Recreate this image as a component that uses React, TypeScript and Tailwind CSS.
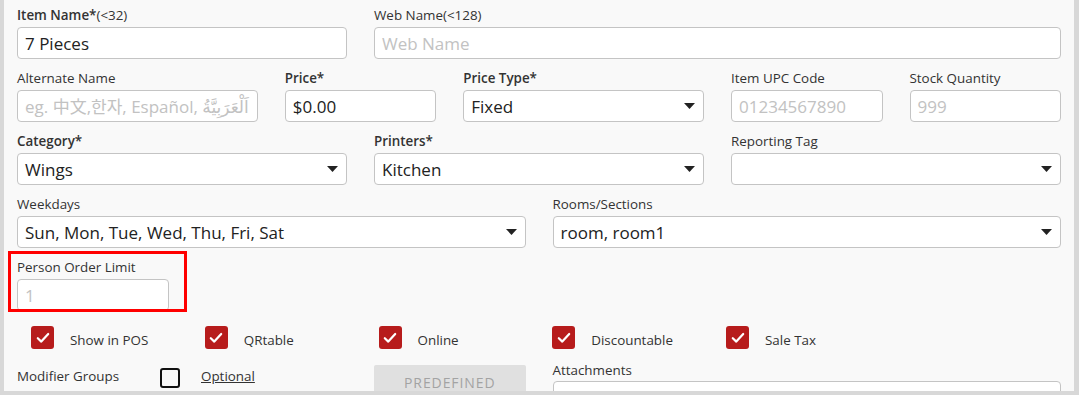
import React from "react";

const font = { fontFamily: '"Open Sans", "Noto Sans", "Noto Sans CJK KR", "DejaVu Sans", sans-serif' };

function Label({ bold, extra, children }: { bold?: boolean; extra?: string; children: React.ReactNode }) {
  return (
    <div className={`h-[20px] mb-[2px] text-[13.4px] leading-[20px] text-[#333] whitespace-nowrap ${bold ? "font-semibold" : ""}`}>
      {children}
      {extra && <span className="font-normal">{extra}</span>}
    </div>
  );
}

function Input({ value, placeholder }: { value?: string; placeholder?: string }) {
  return (
    <div className="h-[32px] rounded-[4px] border border-[#c4c4c4] bg-white px-[7px] pt-[2px] flex items-center overflow-hidden">
      {value ? (
        <span className="text-[17px] text-[#222] whitespace-nowrap">{value}</span>
      ) : (
        <span className="text-[17px] text-[#c2c2c2] whitespace-nowrap">{placeholder}</span>
      )}
    </div>
  );
}

function Select({ value }: { value?: string }) {
  return (
    <div className="h-[32px] rounded-[4px] border border-[#c4c4c4] bg-white pl-[7px] pr-[8px] flex items-center justify-between overflow-hidden">
      <span className="text-[17px] text-[#222] whitespace-nowrap pt-[2px]">{value ?? ""}</span>
      <svg width="11" height="6" viewBox="0 0 11 6" className="shrink-0">
        <path d="M0 0 H11 L5.5 6 Z" fill="#222" />
      </svg>
    </div>
  );
}

function Check({ label }: { label: string }) {
  return (
    <div className="w-[173.75px] flex items-center">
      <div className="w-[23px] h-[23px] rounded-[3px] bg-[#b71c1c] flex items-center justify-center">
        <svg width="14" height="12" viewBox="0 0 14 12">
          <path d="M1.8 6.2 L5.3 9.6 L12.2 2" fill="none" stroke="white" strokeWidth="2.2" strokeLinecap="round" strokeLinejoin="round" />
        </svg>
      </div>
      <span className="ml-[16px] text-[13.4px] text-[#333] pt-[5px]">{label}</span>
    </div>
  );
}

export default function App() {
  return (
    <div className="w-[1079px] h-[395px] bg-[#d8d8d8] pl-[4px] pr-[5px] pb-[4px]" style={font}>
      <div className="w-[1070px] h-[391px] bg-[#f9f9f9] overflow-hidden px-[13px] pt-[5px]">
        <div className="grid grid-cols-12 gap-x-[27px] gap-y-[9px]">
          <div className="col-span-4">
            <Label bold extra="(<32)">Item Name*</Label>
            <Input value="7 Pieces" />
          </div>
          <div className="col-span-8">
            <Label>Web Name(&lt;128)</Label>
            <Input placeholder="Web Name" />
          </div>

          <div className="col-span-3">
            <Label>Alternate Name</Label>
            <Input placeholder="eg. 中文,한자, Español, اَلْعَرَبِيَّةُ" />
          </div>
          <div className="col-span-2">
            <Label bold>Price*</Label>
            <Input value="$0.00" />
          </div>
          <div className="col-span-3">
            <Label bold>Price Type*</Label>
            <Select value="Fixed" />
          </div>
          <div className="col-span-2">
            <Label>Item UPC Code</Label>
            <Input placeholder="01234567890" />
          </div>
          <div className="col-span-2">
            <Label>Stock Quantity</Label>
            <Input placeholder="999" />
          </div>

          <div className="col-span-4">
            <Label bold>Category*</Label>
            <Select value="Wings" />
          </div>
          <div className="col-span-4">
            <Label bold>Printers*</Label>
            <Select value="Kitchen" />
          </div>
          <div className="col-span-4">
            <Label>Reporting Tag</Label>
            <Select />
          </div>

          <div className="col-span-6">
            <Label>Weekdays</Label>
            <Select value="Sun, Mon, Tue, Wed, Thu, Fri, Sat" />
          </div>
          <div className="col-span-6">
            <Label>Rooms/Sections</Label>
            <Select value="room, room1" />
          </div>

          <div className="col-span-2 relative">
            <div className="absolute left-[-9px] top-[-6px] w-[179px] h-[61px] border-[3px] border-[#ff0000] pointer-events-none" />
            <Label>Person Order Limit</Label>
            <Input placeholder="1" />
          </div>
        </div>

        <div className="flex pl-[14px] mt-[14px]">
          <Check label="Show in POS" />
          <Check label="QRtable" />
          <Check label="Online" />
          <Check label="Discountable" />
          <Check label="Sale Tax" />
        </div>

        <div className="grid grid-cols-12 gap-x-[27px] mt-[12px]">
          <div className="col-span-4 flex items-center h-[20px] self-start mt-[6px]">
            <span className="text-[13.4px] text-[#333] w-[143px] -mt-[5px]">Modifier Groups</span>
            <div className="w-[20px] h-[20px] rounded-[3px] border-2 border-[#111]" />
            <span className="ml-[21px] text-[13.4px] text-[#333] underline -mt-[5px]">Optional</span>
          </div>
          <div className="col-span-2 pt-[3px]">
            <div className="h-[32px] bg-[#e0e0e0] rounded-[2px] flex items-center justify-center pt-[2px] text-[14px] tracking-[0.9px] text-[#a3a3a3]">
              PREDEFINED
            </div>
          </div>
          <div className="col-span-6">
            <div className="h-[16px] mb-[3px] text-[13.4px] leading-[16px] text-[#333]">Attachments</div>
            <div className="h-[32px] rounded-[4px] border border-[#c4c4c4] bg-white" />
          </div>
        </div>
      </div>
    </div>
  );
}
